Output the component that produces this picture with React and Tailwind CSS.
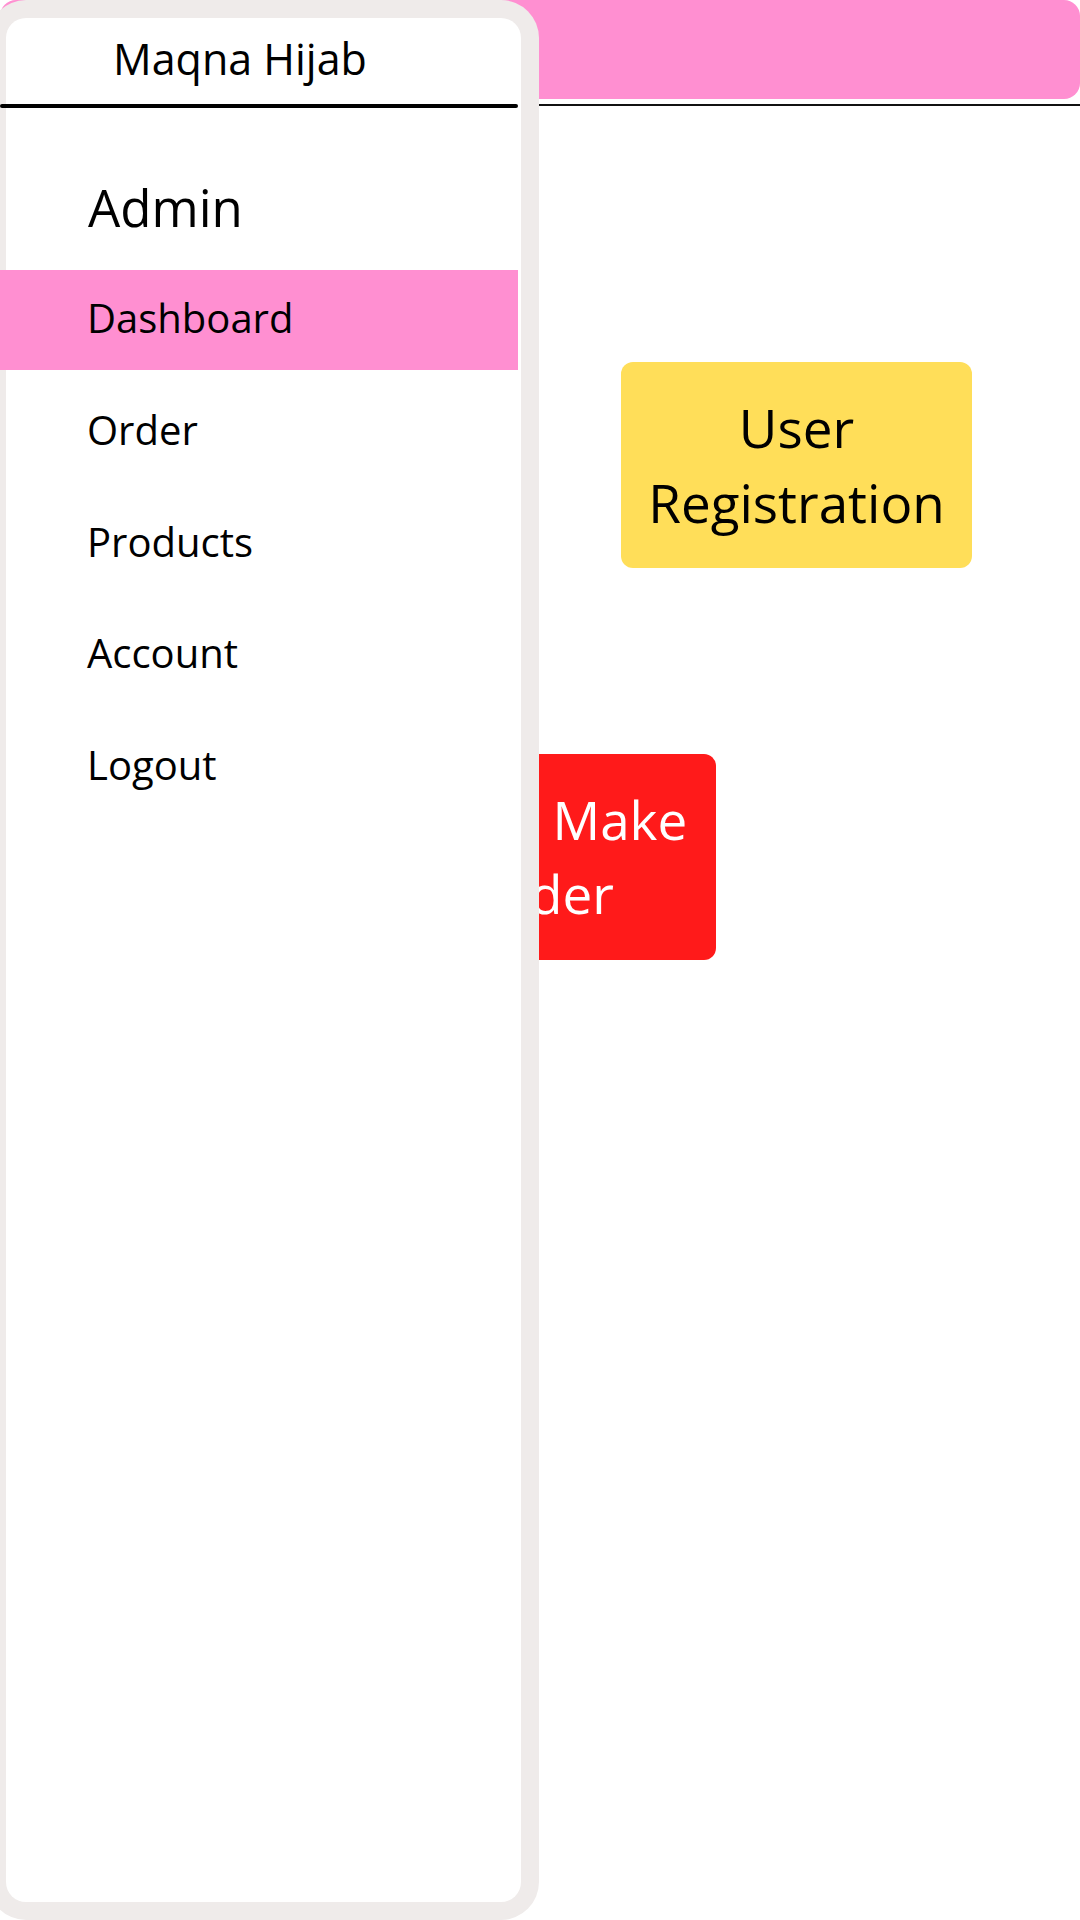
export default function App() {
  const items = ["Order", "Products", "Account", "Logout"];
  return (
    <div
      className="relative w-[1080px] h-[1920px] overflow-hidden bg-white text-black"
      style={{ fontFamily: '"Open Sans", "Noto Sans", sans-serif' }}
    >
      {/* Main page */}
      <div className="flex flex-col">
        <div className="h-[99px] w-full rounded-[16px] bg-[#ff8fd1]" />
        <div className="mt-[5px] h-[2px] w-full bg-[#111]" />
        <div className="ml-[621px] mt-[256px] flex h-[206px] w-[351px] items-center justify-center rounded-[12px] bg-[#ffde59] text-center text-[53px] leading-[75px]">
          <span>
            User
            <br />
            Registration
          </span>
        </div>
        <div className="ml-[365px] mt-[186px] flex h-[206px] w-[351px] items-center justify-center rounded-[12px] bg-[#ff1a1a] text-center text-[53px] leading-[74px] text-white">
          <span>
            Guest Make
            <br />
            Order
          </span>
        </div>
      </div>

      {/* Sidebar drawer over the page */}
      <aside className="absolute left-[-12px] top-0 h-[1920px] w-[551px] rounded-[38px] bg-[#efebea] p-[18px]">
        <div className="flex h-full flex-col rounded-[20px] bg-white">
          <div className="pl-[107px] pt-[12px] text-[43px] leading-[58px]">Maqna Hijab</div>
          <div className="-ml-[6px] mt-[16px] h-[4px] w-[518px] rounded-full bg-black" />
          <div className="mt-[65px] pl-[82px] text-[51px] leading-[69px]">Admin</div>
          <nav className="-ml-[6px] mt-[28px] flex w-[518px] flex-col text-[40px] leading-[55px]">
            <div className="h-[100px] bg-[#ff8fd1] pl-[87px] pt-[20px]">Dashboard</div>
            {items.map((it) => (
              <div key={it} className="h-[111.5px] pl-[87px] pt-[32px]">
                {it}
              </div>
            ))}
          </nav>
        </div>
      </aside>
    </div>
  );
}
